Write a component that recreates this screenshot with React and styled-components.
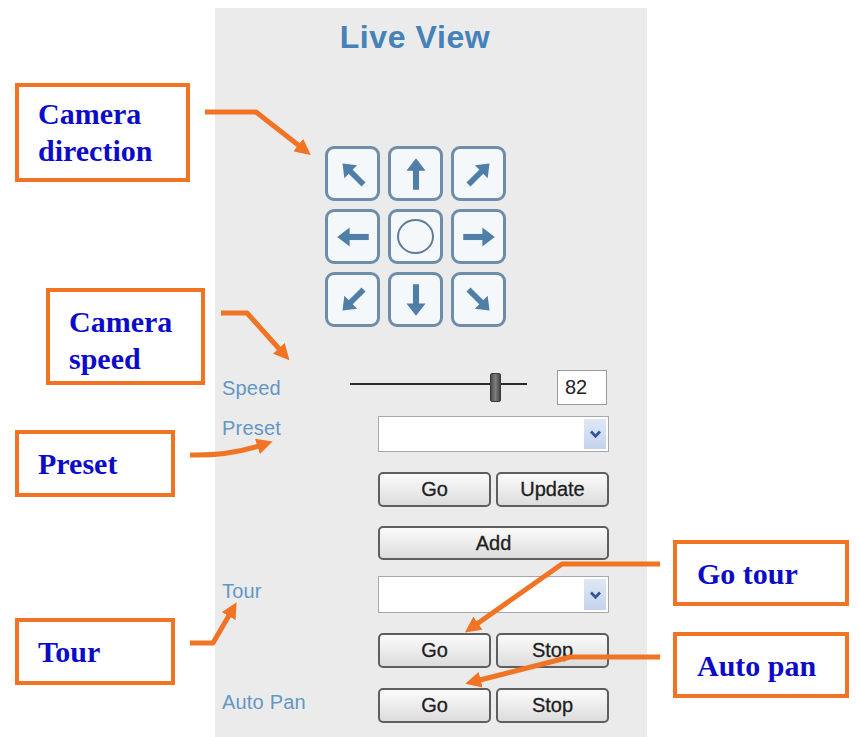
import React from 'react';
import styled, { createGlobalStyle } from 'styled-components';

const Global = createGlobalStyle`
	html, body {
		margin: 0;
		padding: 0;
		background: #ffffff;
	}
`;

const Page = styled.div`
	position: relative;
	width: 859px;
	height: 737px;
	overflow: hidden;
	display: grid;
	grid-template-columns: 215px 432px 212px;
	font-family: 'Liberation Sans', Arial, sans-serif;
`;

const Side = styled.div`
	display: flex;
	flex-direction: column;
	align-items: flex-start;
`;

const Callout = styled.div`
	box-sizing: border-box;
	margin-top: ${(p) => p.$top}px;
	margin-left: ${(p) => p.$left}px;
	width: ${(p) => p.$w}px;
	height: ${(p) => p.$h}px;
	border: 4px solid #f07424;
	background: #fff;
	overflow: hidden;
	display: flex;
	flex-direction: column;
	justify-content: ${(p) => (p.$pad ? 'flex-start' : 'center')};
	padding: ${(p) => p.$pad || 0}px 0 0 ${(p) => p.$indent || 19}px;
	font-family: 'Liberation Serif', 'Times New Roman', serif;
	font-weight: bold;
	font-size: 30px;
	line-height: 37px;
	color: #0c0cc8;
	white-space: nowrap;
`;

const Panel = styled.div`
	margin-top: 8px;
	height: 729px;
	background: #ebebeb;
	display: flex;
	flex-direction: column;
`;

const Title = styled.h1`
	margin: 12px 0 0;
	width: 400px;
	text-align: center;
	font-size: 32px;
	line-height: 34px;
	font-weight: bold;
	letter-spacing: 0.6px;
	color: #4582b9;
`;

const DirGrid = styled.div`
	margin: 92px 0 0 110px;
	display: grid;
	grid-template-columns: repeat(3, 55px);
	grid-auto-rows: 55px;
	gap: 8px;
`;

const DirButton = styled.button`
	box-sizing: border-box;
	padding: 0;
	border: 3px solid #6d8dab;
	border-radius: 9px;
	background: #f5f8fb;
	display: flex;
	align-items: center;
	justify-content: center;
	cursor: pointer;
`;

const ArrowSvg = styled.svg`
	width: ${(p) => (p.$rot % 90 === 0 ? 36 : 34)}px;
	height: ${(p) => (p.$rot % 90 === 0 ? 36 : 34)}px;
	transform: rotate(${(p) => p.$rot}deg);
`;

const Ring = styled.span`
	box-sizing: border-box;
	width: 37px;
	height: 35px;
	border: 2.5px solid #5f7c98;
	border-radius: 50%;
`;

const Row = styled.div`
	display: flex;
	align-items: ${(p) => p.$align || 'flex-start'};
	margin-top: ${(p) => p.$top}px;
	padding-left: 7px;
`;

const Label = styled.div`
	width: ${(p) => p.$w || 156}px;
	padding-top: ${(p) => p.$pt || 0}px;
	font-size: 20px;
	line-height: 24px;
	color: #6496c6;
	letter-spacing: 0.2px;
`;

const Slider = styled.div`
	position: relative;
	width: 177px;
	height: 35px;
	display: flex;
	align-items: center;

	&::before {
		content: '';
		width: 100%;
		height: 2px;
		margin-top: -8px;
		background: #2a2a2a;
	}
`;

const Thumb = styled.span`
	position: absolute;
	left: 140px;
	top: 3px;
	width: 11px;
	height: 29px;
	box-sizing: border-box;
	border: 1px solid #3a3a3a;
	border-radius: 2px;
	background: linear-gradient(90deg, #4f4f4f, #7f7f7f 50%, #444);
`;

const NumBox = styled.div`
	box-sizing: border-box;
	margin-left: 30px;
	width: 50px;
	height: 35px;
	background: #fff;
	border: 1px solid #9a9a9a;
	padding-left: 7px;
	font-size: 20px;
	line-height: 33px;
	color: #222;
`;

const Controls = styled.div`
	width: 231px;
	display: flex;
	gap: 5px;
`;

const Select = styled.div`
	box-sizing: border-box;
	width: 231px;
	height: ${(p) => p.$h}px;
	background: #fff;
	border: 1px solid #a8a8a8;
	display: flex;
	justify-content: flex-end;
	padding: 2px;
`;

const DropBtn = styled.span`
	width: 22px;
	background: linear-gradient(#dfe8f6, #c4d3ec);
	display: flex;
	align-items: center;
	justify-content: center;
`;

const Button = styled.button`
	box-sizing: border-box;
	flex: 1;
	height: ${(p) => p.$h || 35}px;
	padding: 0;
	border: 2px solid #5e5e5e;
	border-radius: 5px;
	background: linear-gradient(#fbfbfb, #e9e9e9 60%, #dcdcdc);
	font-family: 'Liberation Sans', Arial, sans-serif;
	font-size: 20px;
	color: #1e1e1e;
	-webkit-text-stroke: 0.3px #1e1e1e;
	cursor: pointer;
`;

const Overlay = styled.svg`
	position: absolute;
	left: 0;
	top: 0;
	pointer-events: none;
`;

const arrows = [315, 0, 45, 270, null, 90, 225, 180, 135];

const Arrow = ({ rot }) => (
	<ArrowSvg $rot={rot} viewBox="0 0 32 32">
		<polygon points="16,2 7.5,13 24.5,13" fill="#4f7ea8" />
		<rect x="13.3" y="12" width="5.4" height="18" fill="#4f7ea8" />
	</ArrowSvg>
);

const Chevron = () => (
	<svg width="13" height="10" viewBox="0 0 13 10">
		<path d="M2 2.5 L6.5 7.2 L11 2.5" fill="none" stroke="#34569a" strokeWidth="2.8" />
	</svg>
);

const DropSelect = ({ h }) => (
	<Select $h={h}>
		<DropBtn>
			<Chevron />
		</DropBtn>
	</Select>
);

const leaders = [
	'M205,112 L256,112 L302,148',
	'M221,313 L247,313 L282,352',
	'M190,455 Q228,456 262,445',
	'M190,643 L213,643 L231,612',
	'M660,564 L562,564 L474,626',
	'M660,657 L570,657 L476,681',
];

export default function App() {
	return (
		<>
			<Global />
			<Page>
				<Side>
					<Callout $top={83} $left={15} $w={175} $h={99} $pad={8}>
						<span>Camera</span>
						<span>direction</span>
					</Callout>
					<Callout $top={106} $left={46} $w={159} $h={97} $pad={11} $indent={19}>
						<span>Camera</span>
						<span>speed</span>
					</Callout>
					<Callout $top={45} $left={15} $w={160} $h={67}>
						Preset
					</Callout>
					<Callout $top={121} $left={15} $w={160} $h={67}>
						Tour
					</Callout>
				</Side>

				<Panel>
					<Title>Live View</Title>
					<DirGrid>
						{arrows.map((rot, i) => (
							<DirButton key={i}>{rot === null ? <Ring /> : <Arrow rot={rot} />}</DirButton>
						))}
					</DirGrid>

					<Row $top={43} $align="center">
						<Label $w={128}>Speed</Label>
						<Slider>
							<Thumb />
						</Slider>
						<NumBox>82</NumBox>
					</Row>

					<Row $top={11}>
						<Label>Preset</Label>
						<DropSelect h={36} />
					</Row>
					<Row $top={20}>
						<Label />
						<Controls>
							<Button>Go</Button>
							<Button>Update</Button>
						</Controls>
					</Row>
					<Row $top={19}>
						<Label />
						<Controls>
							<Button $h={34}>Add</Button>
						</Controls>
					</Row>

					<Row $top={16}>
						<Label $pt={3}>Tour</Label>
						<DropSelect h={37} />
					</Row>
					<Row $top={20}>
						<Label />
						<Controls>
							<Button>Go</Button>
							<Button>Stop</Button>
						</Controls>
					</Row>
					<Row $top={20}>
						<Label $pt={2}>Auto Pan</Label>
						<Controls>
							<Button>Go</Button>
							<Button>Stop</Button>
						</Controls>
					</Row>
				</Panel>

				<Side>
					<Callout $top={540} $left={26} $w={176} $h={66} $indent={20}>
						Go tour
					</Callout>
					<Callout $top={26} $left={26} $w={176} $h={66} $indent={20}>
						Auto pan
					</Callout>
				</Side>

				<Overlay width="859" height="737" viewBox="0 0 859 737">
					<defs>
						<marker id="head" viewBox="0 0 10 10" refX="3" refY="5" markerWidth="3.2" markerHeight="3.2" orient="auto">
							<path d="M0,0 L10,5 L0,10 z" fill="#f07424" />
						</marker>
					</defs>
					{leaders.map((d) => (
						<path
							key={d}
							d={d}
							fill="none"
							stroke="#f07424"
							strokeWidth="5"
							strokeLinejoin="round"
							markerEnd="url(#head)"
						/>
					))}
				</Overlay>
			</Page>
		</>
	);
}
